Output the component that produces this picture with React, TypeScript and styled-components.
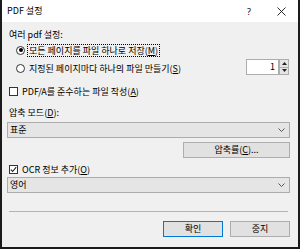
import styled, { createGlobalStyle } from 'styled-components';

const GlobalStyle = createGlobalStyle`
    html, body {
        margin: 0;
        padding: 0;
        background: #ffffff;
    }
    body {
        font-family: "Noto Sans CJK KR", "Noto Sans", sans-serif;
        font-size: 9px;
        color: #000000;
    }
`;

const Window = styled.div`
    width: 300px;
    height: 249px;
    box-sizing: border-box;
    border: 2px solid #1b1b1b;
    border-top: none;
    background: #f0f0f0;
    display: flex;
    flex-direction: column;
`;

const TitleBar = styled.div`
    height: 22px;
    background: #ffffff;
    display: flex;
    align-items: center;
    padding-left: 5px;
`;

const Title = styled.span`
    flex: 1;
    font-size: 9px;
    line-height: 12px;
`;

const TitleButton = styled.div<{ $width: number }>`
    width: ${(p) => p.$width}px;
    height: 22px;
    display: flex;
    align-items: center;
    justify-content: center;
    font-family: "Noto Sans", sans-serif;
    font-size: 9px;
`;

const Body = styled.div`
    flex: 1;
    padding: 7px 8px 0 5px;
    display: flex;
    flex-direction: column;
`;

const Label = styled.div<{ $top?: number }>`
    margin: ${(p) => p.$top ?? 0}px 0 0 2px;
    height: 12px;
    line-height: 12px;
`;

const Row = styled.div<{ $top?: number; $height?: number; $indent?: number }>`
    margin: ${(p) => p.$top ?? 0}px 0 0 ${(p) => p.$indent ?? 0}px;
    height: ${(p) => p.$height ?? 14}px;
    display: flex;
    align-items: center;
    gap: 2px;
`;

const Radio = styled.span<{ $checked?: boolean }>`
    width: 9px;
    height: 9px;
    box-sizing: border-box;
    border: 1px solid #333333;
    border-radius: 50%;
    background: #ffffff;
    display: flex;
    align-items: center;
    justify-content: center;
    flex-shrink: 0;

    &::after {
        content: '';
        width: 4px;
        height: 4px;
        border-radius: 50%;
        background: ${(p) => (p.$checked ? '#000000' : 'transparent')};
    }
`;

const Check = styled.span`
    width: 9px;
    height: 9px;
    box-sizing: border-box;
    border: 1px solid #333333;
    background: #ffffff;
    display: flex;
    align-items: center;
    justify-content: center;
    flex-shrink: 0;
`;

const Text = styled.span<{ $focused?: boolean }>`
    line-height: 11px;
    padding: 0 1px;
    border: 1px ${(p) => (p.$focused ? 'dotted #000000' : 'solid transparent')};
    white-space: nowrap;
`;

const Spacer = styled.div`
    flex: 1;
`;

const Spin = styled.div`
    width: 43px;
    height: 16px;
    display: flex;
    margin: 0 1px 2px 0;
`;

const SpinInput = styled.div`
    flex: 1;
    box-sizing: border-box;
    border: 1px solid #adadad;
    background: #ffffff;
    text-align: right;
    padding-right: 3px;
    line-height: 14px;
`;

const SpinButtons = styled.div`
    width: 10px;
    display: flex;
    flex-direction: column;
    border: 1px solid #adadad;
    border-left: none;
    box-sizing: border-box;
`;

const SpinArrow = styled.div`
    flex: 1;
    background: #e5e5e5;
    display: flex;
    align-items: center;
    justify-content: center;
    border-left: 1px solid #adadad;

    & + & {
        border-top: 1px solid #adadad;
    }
`;

const Combo = styled.div<{ $top?: number }>`
    margin-top: ${(p) => p.$top ?? 0}px;
    height: 16px;
    box-sizing: border-box;
    border: 1px solid #acacac;
    background: #e5e5e5;
    display: flex;
    align-items: center;
    padding: 0 4px 0 2px;
    line-height: 14px;
`;

const PushButton = styled.div<{ $width: number; $default?: boolean }>`
    width: ${(p) => p.$width}px;
    height: 16px;
    box-sizing: border-box;
    border: 1px solid ${(p) => (p.$default ? '#0078d7' : '#adadad')};
    background: #e1e1e1;
    display: flex;
    align-items: center;
    justify-content: center;
    line-height: 14px;
`;

const ButtonRow = styled.div<{ $top?: number }>`
    margin-top: ${(p) => p.$top ?? 0}px;
    display: flex;
    justify-content: flex-end;
    gap: 7px;
`;

const Separator = styled.div`
    margin: 18px 2px 0 2px;
    height: 1px;
    background: #b4b4b4;
`;

const Chevron = () => (
    <svg width="7" height="4" viewBox="0 0 7 4">
        <path d="M0.5 0.5 L3.5 3.5 L6.5 0.5" fill="none" stroke="#555" strokeWidth="1" />
    </svg>
);

const CheckMark = () => (
    <svg width="7" height="7" viewBox="0 0 7 7">
        <path d="M0.8 3.6 L2.7 5.5 L6.2 1.2" fill="none" stroke="#222" strokeWidth="1.1" />
    </svg>
);

const App = () => {
    return (
        <>
            <GlobalStyle />
            <Window>
                <TitleBar>
                    <Title>PDF 설정</Title>
                    <TitleButton $width={30}>?</TitleButton>
                    <TitleButton $width={34}>
                        <svg width="9" height="9" viewBox="0 0 9 9">
                            <path d="M0.5 0.5 L8.5 8.5 M8.5 0.5 L0.5 8.5" stroke="#111" strokeWidth="0.9" />
                        </svg>
                    </TitleButton>
                </TitleBar>
                <Body>
                    <Label>여러 pdf 설정:</Label>
                    <Row $top={2} $indent={9}>
                        <Radio $checked />
                        <Text $focused>모든 페이지를 파일 하나로 저장(<u>M</u>)</Text>
                    </Row>
                    <Row $top={2} $height={18} $indent={9}>
                        <Radio />
                        <Text>지정된 페이지마다 하나의 파일 만들기(<u>S</u>)</Text>
                        <Spacer />
                        <Spin>
                            <SpinInput>1</SpinInput>
                            <SpinButtons>
                                <SpinArrow>
                                    <svg width="5" height="3" viewBox="0 0 5 3"><path d="M0 3 L2.5 0 L5 3 Z" fill="#222" /></svg>
                                </SpinArrow>
                                <SpinArrow>
                                    <svg width="5" height="3" viewBox="0 0 5 3"><path d="M0 0 L2.5 3 L5 0 Z" fill="#222" /></svg>
                                </SpinArrow>
                            </SpinButtons>
                        </Spin>
                    </Row>
                    <Row $top={7} $indent={2}>
                        <Check />
                        <Text>PDF/A를 준수하는 파일 작성(<u>A</u>)</Text>
                    </Row>
                    <Label $top={9}>압축 모드(<u>D</u>):</Label>
                    <Combo $top={3}>
                        <Spacer as="span">표준</Spacer>
                        <Chevron />
                    </Combo>
                    <ButtonRow $top={4}>
                        <PushButton $width={107}>압축률(<u>C</u>)...</PushButton>
                    </ButtonRow>
                    <Row $top={4} $indent={2}>
                        <Check>
                            <CheckMark />
                        </Check>
                        <Text>OCR 정보 추가(<u>O</u>)</Text>
                    </Row>
                    <Combo $top={1}>
                        <Spacer as="span">영어</Spacer>
                        <Chevron />
                    </Combo>
                    <Separator />
                    <ButtonRow $top={9}>
                        <PushButton $width={60} $default>확인</PushButton>
                        <PushButton $width={60}>중지</PushButton>
                    </ButtonRow>
                </Body>
            </Window>
        </>
    );
};

export default App;
